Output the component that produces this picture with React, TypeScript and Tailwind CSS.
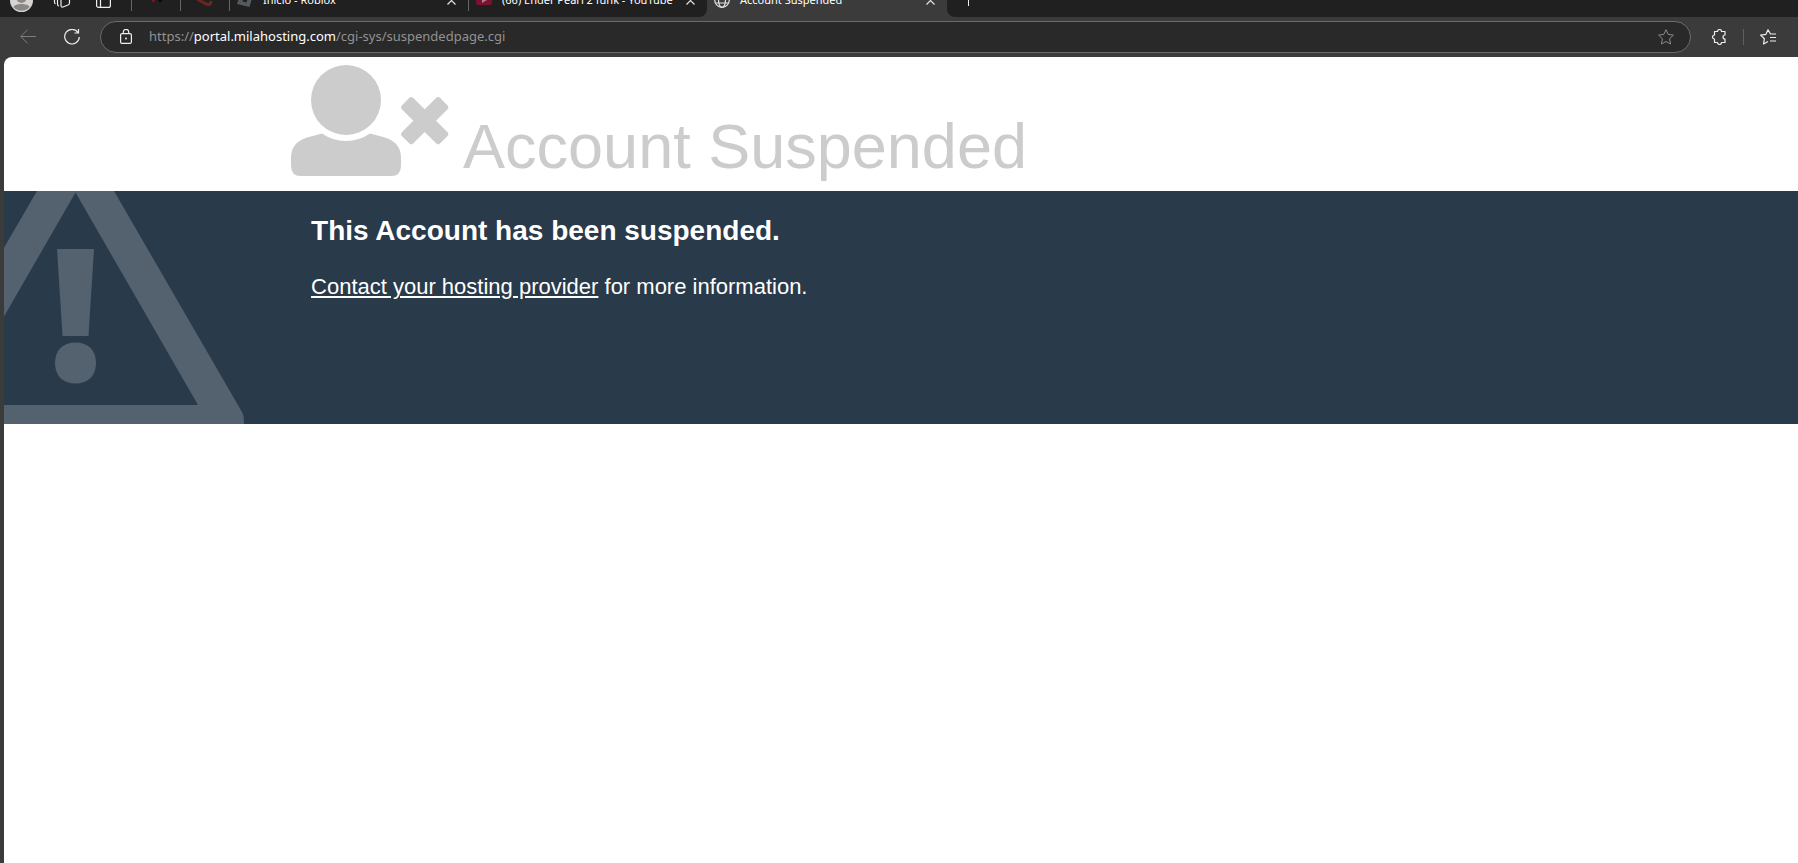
import type { ReactNode } from "react";

const OPEN_TABS = [
  { title: "Início - Roblox", icon: <RobloxIcon /> },
  { title: "(66) Ender Pearl 2 funk - YouTube", icon: <YoutubeIcon /> },
];

function RobloxIcon() {
  return (
    <svg className="h-4 w-4 shrink-0" viewBox="0 0 16 16">
      <path d="M4 0 16 3 12.500 15 0 12Z" fill="#54595f" />
      <path d="m6.500 5.500 4 1-1 4-4-1Z" fill="#202020" />
    </svg>
  );
}

function YoutubeIcon() {
  return (
    <svg className="h-4 w-4 shrink-0" viewBox="0 0 16 16">
      <rect y="2" width="16" height="11" rx="2" fill="#7d1230" />
      <path d="m6 5 5 3-5 3Z" fill="#a9808b" />
    </svg>
  );
}

function GlobeIcon() {
  return (
    <svg className="h-4 w-4 shrink-0" viewBox="0 0 16 16" fill="none" stroke="#e4e4e4" strokeWidth="1.200">
      <circle cx="8" cy="8" r="7.300" />
      <ellipse cx="8" cy="8" rx="3.500" ry="7.300" />
      <path d="M1.500 5h13M1.500 11h13" />
    </svg>
  );
}

function Tab({ title, icon, active = false }: { title: string; icon: ReactNode; active?: boolean }) {
  return (
    <div
      className={`flex h-[34px] shrink-0 items-center pl-[7px] pr-3 ${
        active ? "w-60 bg-[#3b3b3b]" : "w-[238px]"
      }`}
    >
      {icon}
      <span className="ml-[10px] flex-1 whitespace-nowrap text-[11px] text-white">{title}</span>
      <button aria-label={`Close ${title}`}>
        <svg className="h-[9px] w-[9px]" viewBox="0 0 9 9" fill="none" stroke="#e4e4e4" strokeWidth="1.200">
          <path d="m.5.5 8 8m0-8-8 8" />
        </svg>
      </button>
    </div>
  );
}

function TabStrip() {
  return (
    <div className="flex h-[17px] items-end overflow-hidden">
      <div className="flex h-[34px] items-center rounded-br-lg bg-[#202020]">
        {/* Profile, workspaces and vertical tab controls */}
        <div className="flex w-[131px] items-center pl-[10px]">
          <button aria-label="Profile">
            <svg className="h-[23px] w-[23px]" viewBox="0 0 23 23">
              <circle cx="11.500" cy="11.500" r="11.500" fill="#d6d3d0" />
              <circle cx="11.500" cy="9" r="5" fill="#8a8785" />
              <path d="M3.500 18c1-4 15-4 16 0-4 5-12 5-16 0Z" fill="#8a8785" />
            </svg>
          </button>
          <button aria-label="Workspaces" className="ml-5">
            <svg className="h-4 w-[18px]" viewBox="0 0 18 16" fill="none" stroke="#eee" strokeWidth="1.200">
              <path d="M8 2.500v11q0 2 2 1.500l5-2q1.500-.5 1.500-2v-9M4.500 3v9q0 2 1.500 2M1.500 4v6q0 1.500 1 2" />
            </svg>
          </button>
          <button aria-label="Tab actions" className="ml-[25px]">
            <svg className="h-[15px] w-[15px]" viewBox="0 0 15 15" fill="none" stroke="#eee" strokeWidth="1.200">
              <rect x=".6" y=".6" width="13.800" height="13.800" rx="2" />
              <path d="M4.500 1v13M1 4.500h13" />
            </svg>
          </button>
        </div>
        {/* Pinned tabs */}
        <div className="flex h-[21px] w-[49px] items-center justify-center border-l border-[#666]">
          <svg className="h-4 w-4" viewBox="0 0 16 16">
            <path d="M4 6h5l-3 4H4Z" fill="#7b151b" />
            <path d="M9 6h5v4h-3Z" fill="#090909" />
          </svg>
        </div>
        <div className="flex h-[21px] w-[49px] items-center justify-center border-l border-[#666]">
          <svg className="h-4 w-4" viewBox="0 0 16 16" fill="none" stroke="#71241c" strokeWidth="3">
            <path d="m0 7 9 5q5 2 5-3" />
          </svg>
        </div>
        {OPEN_TABS.map(({ title, icon }) => (
          <div key={title} className="flex h-[21px] items-center border-l border-[#666]">
            <Tab title={title} icon={icon} />
          </div>
        ))}
      </div>
      <Tab title="Account Suspended" icon={<GlobeIcon />} active />
      <div className="flex h-[34px] flex-1 items-center rounded-bl-lg bg-[#202020] pb-1 pl-[14px]">
        <button aria-label="New tab">
          <svg className="h-[15px] w-[15px]" viewBox="0 0 15 15" stroke="#eee">
            <path d="M7.500 0v15M0 7.500h15" />
          </svg>
        </button>
      </div>
    </div>
  );
}

function Toolbar() {
  return (
    <div className="flex h-10 items-center pl-5 pr-[22px]">
      <button aria-label="Back">
        <svg className="h-4 w-4" viewBox="0 0 16 16" fill="none" stroke="#7d7d7d">
          <path d="M16 7.500H.8M7.500.8.8 7.500l6.700 6.700" />
        </svg>
      </button>
      <button aria-label="Refresh" className="ml-7">
        <svg className="h-4 w-4" viewBox="0 0 16 16" fill="none" stroke="#eee" strokeWidth="1.200">
          <path d="M14 3.500A7.300 7.300 0 1 0 15.300 8M14.500 0v4h-4" />
        </svg>
      </button>
      <div className="ml-5 flex h-8 flex-1 items-center rounded-full border border-[#6b6b6b] bg-[#292929] pl-[18px] pr-4">
        <svg className="h-4 w-[14px] shrink-0" viewBox="0 0 14 16" fill="none" stroke="#eee" strokeWidth="1.200">
          <rect x="1.600" y="4.600" width="10.800" height="9.800" rx="1.500" />
          <path d="M4.300 4.500V3a2.700 2.700 0 0 1 5.400 0v1.500" />
          <circle cx="7" cy="9.500" r="1" fill="#eee" stroke="none" />
        </svg>
        <a href="#" className="ml-4 flex-1 text-[13px] text-[#929292]">
          https://<span className="text-white">portal.milahosting.com</span>/cgi-sys/suspendedpage.cgi
        </a>
        <button aria-label="Add to favorites">
          <svg className="h-4 w-4" viewBox="0 0 16 16" fill="none" stroke="#8b8b8b" strokeLinejoin="round">
            <path d="m8 .7 2.200 4.700 5.200.7-3.800 3.600.9 5.300L8 12.500 3.500 15l.9-5.300L.6 6.100l5.200-.7Z" />
          </svg>
        </button>
      </div>
      <button aria-label="Extensions" className="ml-5">
        <svg className="h-4 w-4" viewBox="0 0 16 16" fill="none" stroke="#eee" strokeWidth="1.200" strokeLinejoin="round">
          <path d="M3.500 2.500h3a2 2 0 0 1 4 0H14V6a2 2 0 0 0 0 4v3.500h-3.500a2 2 0 0 1-4 0h-3V10a2 2 0 0 1 0-4Z" />
        </svg>
      </button>
      <div className="mx-4 h-4 w-px bg-[#606060]" />
      <button aria-label="Favorites">
        <svg className="h-4 w-4" viewBox="0 0 16 16" fill="none" stroke="#eee" strokeWidth="1.200" strokeLinejoin="round">
          <path d="M16 5h-5.500L8 .7 5.800 5.400l-5.200.7 3.800 3.600-.9 5.300L8 12.500M10 8.500h6M10 12h6" />
        </svg>
      </button>
    </div>
  );
}

function UserRemovedIcon() {
  return (
    <svg className="h-28 w-40 shrink-0" viewBox="1 0 160 112" fill="#ccc" aria-hidden="true">
      <circle cx="56" cy="36" r="35" />
      <path d="M32 69.500Q43 77 56 77t24-7.500l15 4q16 5 16 20.500v8q0 10-10 10H11q-10 0-10-10v-8Q1 78.500 17 73.500Z" />
      <g transform="translate(134.700 56.700)">
        <rect x="-27" y="-8" width="54" height="16" rx="3" transform="rotate(45)" />
        <rect x="-27" y="-8" width="54" height="16" rx="3" transform="rotate(-45)" />
      </g>
    </svg>
  );
}

function WarningIcon() {
  return (
    <svg className="absolute left-0 top-0 h-[233px] w-60" viewBox="0 0 240 233" fill="#54616e" aria-hidden="true">
      <path
        fillRule="evenodd"
        d="M-38 122 33 0h77l128 221q2 3 2 12H-60ZM71.500 1.500-51 214h245Z"
      />
      <path d="M53 58h37l-5.500 87h-26Z" />
      <path d="M71.500 151.500c13 0 20.500 8 20.500 20.500s-7.500 20.500-20.500 20.500S51 184.500 51 172s7.500-20.500 20.500-20.500Z" />
    </svg>
  );
}

export default function App() {
  return (
    <div className="flex min-h-screen flex-col bg-[#3b3b3b] font-['Noto_Sans',sans-serif]">
      <TabStrip />
      <Toolbar />
      <main className="ml-1 flex-1 overflow-hidden rounded-tl-lg bg-white font-['Liberation_Sans',Arial,sans-serif]">
        <header className="flex h-[134px] items-end px-[16%] pb-[15px] text-[#ccc]">
          <UserRemovedIcon />
          <h1 className="ml-3 whitespace-nowrap text-[63px] leading-[60px]">Account Suspended</h1>
        </header>
        <section className="relative h-[233px] overflow-hidden bg-[#293a4a] px-[16%] pt-5 text-white">
          <WarningIcon />
          <div className="pl-5">
            <h2 className="text-[28px] font-bold leading-10">This Account has been suspended.</h2>
            <p className="mt-4 text-[22px] leading-10">
              <a href="#" className="underline">Contact your hosting provider</a> for more information.
            </p>
          </div>
        </section>
      </main>
    </div>
  );
}
